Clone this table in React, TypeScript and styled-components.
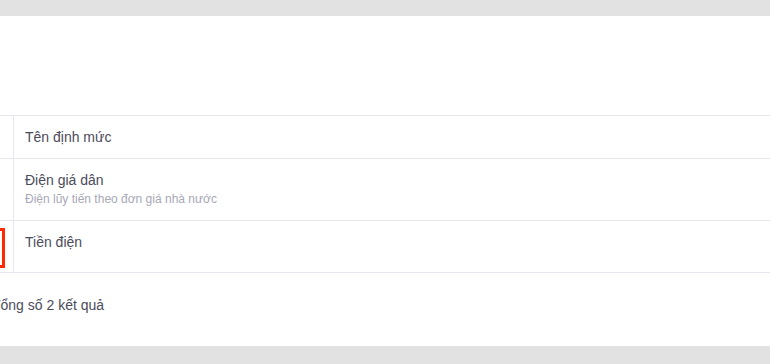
import styled, { createGlobalStyle } from "styled-components";

const GlobalStyle = createGlobalStyle`
    html, body {
        margin: 0;
        padding: 0;
        background: #e2e2e2;
        overflow: hidden;
    }
    body {
        font-family: "Liberation Sans", Arial, sans-serif;
        color: #4b4b5b;
    }
`;

const Page = styled.div`
    padding-top: 16px;
    height: 364px;
    box-sizing: border-box;
`;

const Card = styled.div`
    background: #ffffff;
    margin-left: -60px;
    width: calc(100% + 120px);
    height: 330px;
    padding-top: 99px;
    box-sizing: border-box;
`;

const Table = styled.table`
    width: 100%;
    border-collapse: collapse;
    font-size: 14px;
    line-height: 16px;
`;

const Row = styled.tr`
    border-top: 1px solid #e6e6ef;
    border-bottom: 1px solid #e6e6ef;
`;

const SelectCell = styled.td`
    width: 73px;
    padding: 0;
    border-right: 1px solid #e6e6ef;
    vertical-align: top;
`;

const Cell = styled.td<{ $height?: number }>`
    padding: 13px 11px 13px;
    vertical-align: top;
    height: ${(p) => (p.$height ? `${p.$height}px` : "auto")};
    box-sizing: border-box;
`;

const Title = styled.div`
    color: #4b4b5b;
`;

const Note = styled.div`
    margin-top: 3px;
    font-size: 12px;
    line-height: 16px;
    color: #a8a8b7;
`;

const Marker = styled.div`
    margin: 7px 8px 0 auto;
    width: 40px;
    height: 40px;
    border: 3px solid #ff2a00;
    box-sizing: border-box;
`;

const Footer = styled.div`
    padding: 24px 0 0 52px;
    font-size: 14px;
    line-height: 16px;
    color: #4b4b5b;
`;

export default function App() {
    return (
        <Page>
            <GlobalStyle />
            <Card>
                <Table>
                    <tbody>
                        <Row>
                            <SelectCell />
                            <Cell>
                                <Title>Tên định mức</Title>
                            </Cell>
                        </Row>
                        <Row>
                            <SelectCell />
                            <Cell>
                                <Title>Điện giá dân</Title>
                                <Note>Điện lũy tiến theo đơn giá nhà nước</Note>
                            </Cell>
                        </Row>
                        <Row>
                            <SelectCell>
                                <Marker />
                            </SelectCell>
                            <Cell $height={52}>
                                <Title>Tiền điện</Title>
                            </Cell>
                        </Row>
                    </tbody>
                </Table>
                <Footer>Tổng số 2 kết quả</Footer>
            </Card>
        </Page>
    );
}
